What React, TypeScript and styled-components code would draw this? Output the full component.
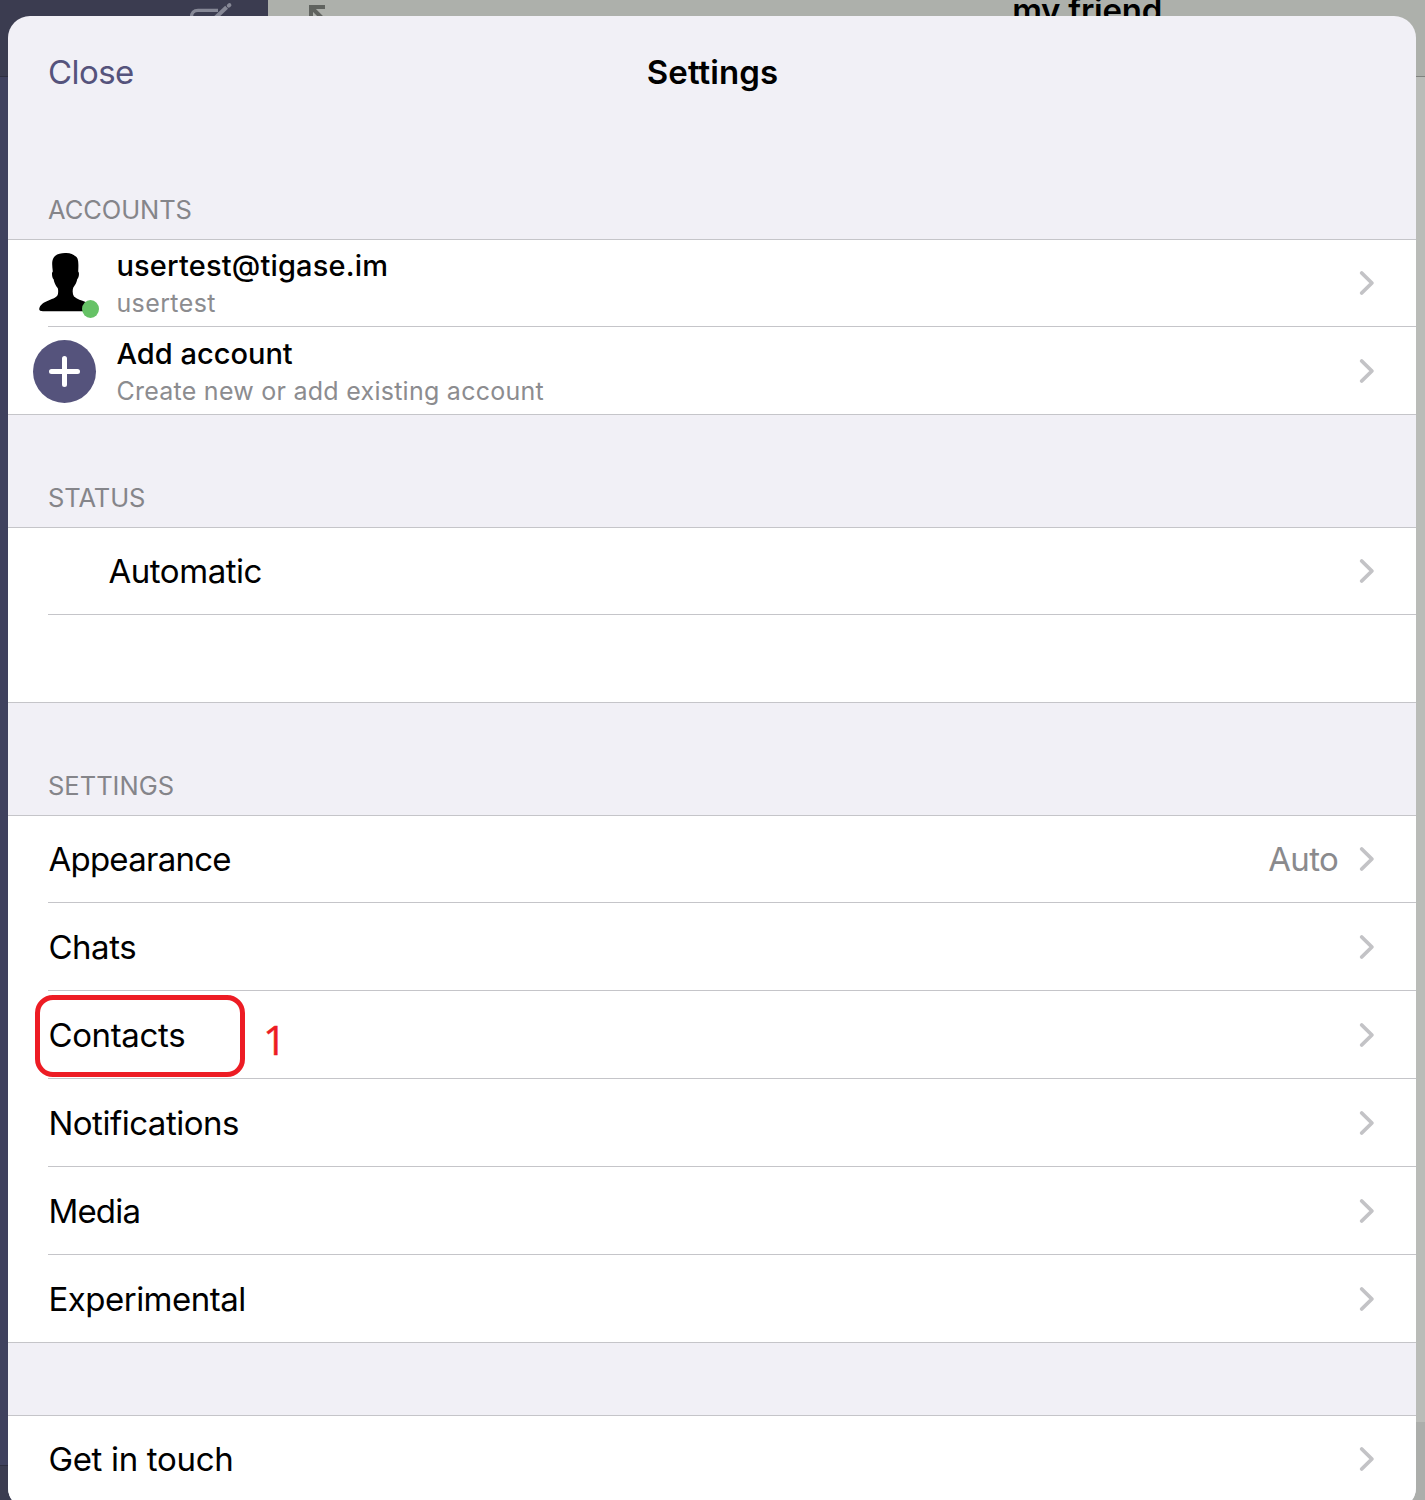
import React from 'react';
import styled, { createGlobalStyle } from 'styled-components';

const Global = createGlobalStyle`
  * { box-sizing: border-box; }
  html, body { margin: 0; padding: 0; }
  body { font-family: Inter, 'Liberation Sans', sans-serif; color: #000; overflow: hidden; }
`;

const Screen = styled.div`
  position: relative;
  width: 1425px;
  height: 1500px;
  overflow: hidden;
`;

const Backdrop = styled.div`
  position: absolute;
  inset: 0;
  display: grid;
  grid-template-columns: 268px 1fr;
`;

const Sidebar = styled.div`
  display: flex;
  flex-direction: column;
  background: #3f415e;
`;

const SidebarBar = styled.div`
  flex: 0 0 77px;
  display: flex;
  justify-content: flex-end;
  padding-right: 34px;
  background: #3b3c50;
  border-bottom: 1px solid #2e2f40;
`;

const SidebarTabs = styled.div`
  flex: 0 0 35px;
  margin-top: auto;
  background: #3b3c50;
  border-top: 1px solid #2e2f40;
`;

const Conversation = styled.div`
  display: flex;
  flex-direction: column;
  background: #babcb8;
`;

const ConversationBar = styled.div`
  flex: 0 0 77px;
  display: flex;
  justify-content: space-between;
  padding: 0 263px 0 40px;
  background: #adb0ab;
  border-bottom: 1px solid #80827f;
`;

const ConversationInput = styled.div`
  flex: 0 0 78px;
  margin-top: auto;
  background: #acaeab;
`;

const Friend = styled.div`
  margin-top: -10px;
  font-size: 33px;
  font-weight: 600;
  line-height: 40px;
  letter-spacing: -0.25px;
`;

const Sheet = styled.main`
  position: relative;
  width: 1408px;
  height: 1492px;
  margin: 16px 9px 0 8px;
  border-radius: 22px 22px 20px 20px;
  overflow: hidden;
  background: #f1f0f6;
`;

const NavBar = styled.header`
  display: grid;
  grid-template-columns: 1fr auto 1fr;
  align-items: center;
  height: 111px;
  padding: 0 40px;
  line-height: 40px;
  font-size: 33px;
`;

const CloseButton = styled.button`
  justify-self: start;
  padding: 0;
  border: 0;
  background: none;
  font: inherit;
  letter-spacing: -0.55px;
  color: #55537c;
`;

const Title = styled.h1`
  margin: 0;
  padding-left: 1px;
  font-size: 33px;
  font-weight: 600;
  letter-spacing: 0.08px;
`;

const SectionTitle = styled.h2<{ $ls: number }>`
  display: flex;
  align-items: flex-end;
  height: 112px;
  margin: 0;
  padding: 0 40px 14px;
  font-size: 25.5px;
  font-weight: 400;
  line-height: 30px;
  letter-spacing: ${(p) => p.$ls}px;
  color: #85858a;
`;

const List = styled.div`
  border-top: 1px solid #c5c5c9;
  background: #fff;
`;

const Row = styled.div<{ $pad?: number }>`
  position: relative;
  display: flex;
  align-items: center;
  height: 88px;
  padding: 0 41px 1px ${(p) => p.$pad ?? 40.4}px;
  &:first-child { height: 87px; }
  &::after {
    content: '';
    position: absolute;
    left: 40px;
    right: 0;
    bottom: 0;
    height: 1px;
    background: #c5c5c9;
  }
  &:last-child::after { left: 0; }
`;

const Label = styled.span<{ $ls?: number }>`
  flex: 1;
  font-size: 33px;
  line-height: 40px;
  letter-spacing: ${(p) => p.$ls ?? -0.4}px;
`;

const Value = styled.span`
  margin-right: 21px;
  font-size: 33px;
  line-height: 40px;
  letter-spacing: -0.7px;
  color: #8a8a8d;
`;

const Avatar = styled.div`
  position: relative;
  flex: 0 0 64px;
  height: 64px;
`;

const Presence = styled.span`
  position: absolute;
  left: 49px;
  top: 49px;
  width: 17px;
  height: 18px;
  border-radius: 50%;
  background: #66c266;
`;

const AccountText = styled.div`
  flex: 1;
  padding: 3px 0 0 19.4px;
`;

const AccountName = styled.div<{ $ls: number }>`
  font-size: 29px;
  font-weight: 500;
  line-height: 38px;
  letter-spacing: ${(p) => p.$ls}px;
`;

const AccountDetail = styled.div<{ $ls: number }>`
  font-size: 25px;
  line-height: 37px;
  letter-spacing: ${(p) => p.$ls}px;
  color: #8c8c8f;
`;

const Highlight = styled.div`
  position: absolute;
  z-index: 1;
  left: 27px;
  top: 4px;
  width: 210px;
  height: 82px;
  border: 5px solid #ed1c24;
  border-radius: 18px;
`;

const Step = styled.span`
  position: absolute;
  left: 255px;
  top: 20px;
  font-family: 'Open Sans', 'Noto Sans', sans-serif;
  font-size: 41px;
  line-height: 56px;
  color: #ed1c24;
  -webkit-text-stroke: 0.4px #ed1c24;
`;

const Gap = styled.div`
  height: 72px;
`;

const Chevron = () => (
  <svg width="16" height="26" viewBox="0 0 16 26" fill="none" stroke="#c3c3c6" strokeWidth="3.8" strokeLinecap="round" strokeLinejoin="round">
    <path d="M2.7 3 L12.9 13 L2.7 23" />
  </svg>
);

const ComposeIcon = () => (
  <svg width="46" height="40" viewBox="0 0 46 40" fill="none" stroke="#868896" strokeWidth="3.2">
    <path d="M30 10.4H10Q3.5 10.4 3.5 17V36H36V20" />
    <path d="M24 21 L38.6 7.200" strokeWidth="4" />
    <path d="M40.800 5.600 L41.400 5.200" strokeWidth="4" strokeLinecap="round" />
  </svg>
);

const ExpandIcon = () => (
  <svg width="30" height="34" viewBox="0 0 30 34" fill="none" stroke="#60635f" strokeWidth="4">
    <path d="M3 24V7H17M3 7L24 28" />
  </svg>
);

const Silhouette = () => (
  <svg width="64" height="64" viewBox="0 0 64 64">
    <path
      d="M32 2C37 1.600 40.500 3.500 42 5C45.800 6.500 45.600 12 45.200 20.500C46.600 21.500 46 27 44.200 28.200C43.600 32 42 34 40.200 36.800C39.300 40 39.500 43 41 45.600C44 48.500 48.500 49.300 52.500 51C57 53 59 56 58.800 60.200H10Q6.200 60.200 6.200 58C6.800 53.500 11 51.200 15.500 49.400C20 47.600 24.800 46.200 25 42.500C25.300 40 25.200 38.500 24.800 37.200C22.600 34.500 21.200 31.800 20.600 28.200C19 27 18.400 21.600 19.800 20.500C19.200 15 18.600 11 20.200 7.600C22 3.500 27 2 32 2Z"
      fill="#000"
    />
  </svg>
);

const AddIcon = () => (
  <svg width="64" height="64" viewBox="0 0 64 64">
    <circle cx="31.500" cy="32.500" r="31.500" fill="#55537c" />
    <path d="M18.500 32.500H44.500M31.500 19.500V45.500" stroke="#fff" strokeWidth="5" strokeLinecap="round" />
  </svg>
);

const settings = [
  { label: 'Appearance', ls: -0.74, value: 'Auto' },
  { label: 'Chats', ls: -0.45 },
  { label: 'Contacts', ls: -0.35, step: '1' },
  { label: 'Notifications', ls: -0.48 },
  { label: 'Media', ls: -0.8 },
  { label: 'Experimental', ls: -0.5 },
];

export default function App() {
  return (
    <Screen>
      <Global />
      <Backdrop>
        <Sidebar>
          <SidebarBar><ComposeIcon /></SidebarBar>
          <SidebarTabs />
        </Sidebar>
        <Conversation>
          <ConversationBar>
            <ExpandIcon />
            <Friend>my friend</Friend>
          </ConversationBar>
          <ConversationInput />
        </Conversation>
      </Backdrop>
      <Sheet>
        <NavBar>
          <CloseButton>Close</CloseButton>
          <Title>Settings</Title>
        </NavBar>

        <SectionTitle $ls={-0.08}>ACCOUNTS</SectionTitle>
        <List>
          <Row $pad={25}>
            <Avatar><Silhouette /><Presence /></Avatar>
            <AccountText>
              <AccountName $ls={0.18}>usertest@tigase.im</AccountName>
              <AccountDetail $ls={0.4}>usertest</AccountDetail>
            </AccountText>
            <Chevron />
          </Row>
          <Row $pad={25}>
            <Avatar><AddIcon /></Avatar>
            <AccountText>
              <AccountName $ls={0.02}>Add account</AccountName>
              <AccountDetail $ls={0.26}>Create new or add existing account</AccountDetail>
            </AccountText>
            <Chevron />
          </Row>
        </List>

        <SectionTitle $ls={-0.1}>STATUS</SectionTitle>
        <List>
          <Row $pad={100.5}><Label $ls={-0.46}>Automatic</Label><Chevron /></Row>
          <Row />
        </List>

        <SectionTitle $ls={0}>SETTINGS</SectionTitle>
        <List>
          {settings.map((s) => (
            <Row key={s.label}>
              <Label $ls={s.ls}>{s.label}</Label>
              {s.value && <Value>{s.value}</Value>}
              <Chevron />
              {s.step && <Highlight />}
              {s.step && <Step>{s.step}</Step>}
            </Row>
          ))}
        </List>

        <Gap />
        <List>
          <Row><Label $ls={-0.32}>Get in touch</Label><Chevron /></Row>
        </List>
      </Sheet>
    </Screen>
  );
}
